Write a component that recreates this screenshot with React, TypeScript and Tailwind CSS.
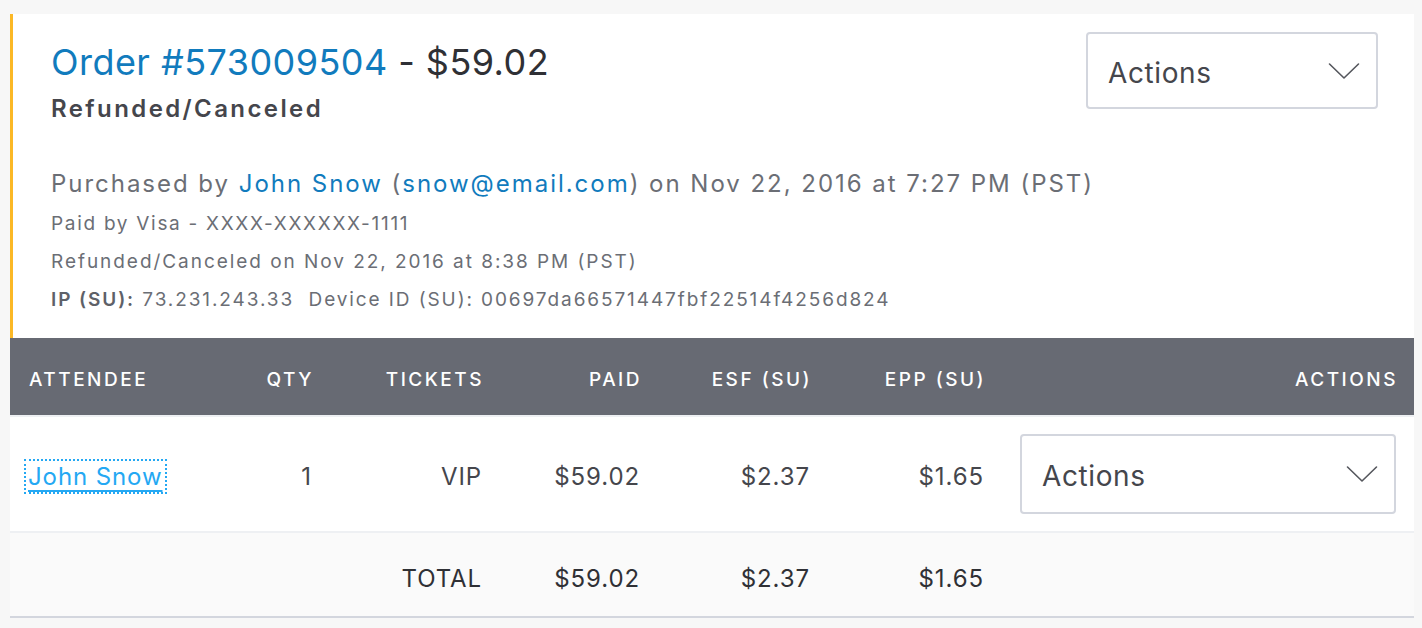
import React from "react";

const Chevron = ({ className = "" }: { className?: string }) => (
  <svg className={className} width="32" height="18" viewBox="0 0 32 18" fill="none">
    <path d="M1.5 2 L16 16 L30.5 2" stroke="#55575d" strokeWidth="1.6" strokeLinecap="round" strokeLinejoin="round" />
  </svg>
);

const Dropdown = ({ w, h }: { w: string; h: string }) => (
  <div className={`${w} ${h} flex items-center justify-between border-2 border-[#d3d6de] rounded-[4px] bg-white pl-[20px] pr-[16px]`}>
    <span className="text-[28px] text-[#45464c] tracking-[0.6px] pt-[4px]">Actions</span>
    <Chevron />
  </div>
);

export default function App() {
  const font = { fontFamily: "Inter, 'Liberation Sans', sans-serif" };
  return (
    <div className="min-h-[628px] bg-[#f7f7f7] pt-[14px] pl-[10px] pr-[8px]" style={font}>
      <div className="bg-white">
        {/* Top section */}
        <div className="border-l-[3px] border-[#fbb826] flex justify-between">
          <div className="flex-1 min-w-0 pl-[38px] pt-[24px] pb-[19px] whitespace-nowrap">
            <div className="text-[36px] leading-[48px] tracking-[0.45px]">
              <span className="text-[#117bbd]">Order #573009504</span>
              <span className="text-[#2f3035]"> - $59.02</span>
            </div>
            <div className="mt-[7px] text-[24px] leading-[32px] font-semibold text-[#45464c] tracking-[2.4px]">
              Refunded/Canceled
            </div>
            <div className="mt-[41px] text-[24px] leading-[36px] text-[#6b6e75] tracking-[1.97px]">
              Purchased by <span className="text-[#117bbd]">John Snow</span> (
              <span className="text-[#117bbd]">snow@email.com</span>) on Nov 22, 2016 at 7:27 PM (PST)
            </div>
            <div className="text-[19px] leading-[38px] text-[#6b6e75] tracking-[1.7px] mt-[3px]">
              Paid by Visa - XXXX-XXXXXX-1111
            </div>
            <div className="text-[19px] leading-[38px] text-[#6b6e75] tracking-[1.95px]">
              Refunded/Canceled on Nov 22, 2016 at 8:38 PM (PST)
            </div>
            <div className="text-[19px] leading-[38px] text-[#6b6e75] tracking-[1.9px]">
              <span className="font-semibold text-[#5e6168]">IP (SU):</span> 73.231.243.33&nbsp;&nbsp;Device ID (SU): 00697da66571447fbf22514f4256d824
            </div>
          </div>
          <div className="shrink-0 pt-[18px] pr-[36px]">
            <Dropdown w="w-[292px]" h="h-[77px]" />
          </div>
        </div>

        {/* Table header */}
        <div className="flex h-[77px] items-center pt-[7px] bg-[#676a73] text-white text-[19px] font-medium tracking-[2.5px]">
          <div className="w-[220px] pl-[19px]">ATTENDEE</div>
          <div className="w-[99px] text-right pr-[15px]">QTY</div>
          <div className="w-[170px] text-right pr-[15px]">TICKETS</div>
          <div className="w-[158px] text-right pr-[15px]">PAID</div>
          <div className="w-[170px] text-right pr-[15px]">ESF (SU)</div>
          <div className="w-[174px] text-right pr-[15px]">EPP (SU)</div>
          <div className="flex-1 text-right pr-[16px]">ACTIONS</div>
        </div>

        {/* Row */}
        <div className="flex h-[118px] items-center border-t-2 border-b-2 border-[#eef0f3] text-[24px] text-[#45464c] tracking-[0.9px]">
          <div className="w-[220px] pl-[16px] pt-[6px]">
            <span className="text-[#24a8f3] underline decoration-2 underline-offset-[5px] outline-2 outline-dotted outline-[#24a8f3] px-[2px] py-[1px]">
              John Snow
            </span>
          </div>
          <div className="w-[99px] text-right pr-[17px] pt-[6px]">1</div>
          <div className="w-[170px] text-right pr-[17px] pt-[6px]">VIP</div>
          <div className="w-[158px] text-right pr-[17px] pt-[6px]">$59.02</div>
          <div className="w-[170px] text-right pr-[17px] pt-[6px]">$2.37</div>
          <div className="w-[174px] text-right pr-[17px] pt-[6px]">$1.65</div>
          <div className="flex-1 pl-[19px] pr-[18px]">
            <Dropdown w="w-full" h="h-[80px]" />
          </div>
        </div>

        {/* Total */}
        <div className="flex h-[85px] items-center pt-[8px] bg-[#fafafa] border-b-2 border-[#d3d6de] text-[24px] text-[#2f3035] tracking-[0.9px]">
          <div className="w-[220px]"></div>
          <div className="w-[99px]"></div>
          <div className="w-[170px] text-right pr-[17px]">TOTAL</div>
          <div className="w-[158px] text-right pr-[17px]">$59.02</div>
          <div className="w-[170px] text-right pr-[17px]">$2.37</div>
          <div className="w-[174px] text-right pr-[17px]">$1.65</div>
          <div className="flex-1"></div>
        </div>
      </div>
    </div>
  );
}
